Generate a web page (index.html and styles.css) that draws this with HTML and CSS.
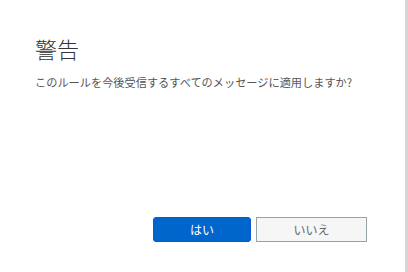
FILE: index.html
```html
<!DOCTYPE html>
<html lang="ja">
<head>
<meta charset="utf-8">
<link rel="stylesheet" href="styles.css">
</head>
<body>
<div class="dialog">
  <div class="content">
    <h1 class="title">警告</h1>
    <p class="message">このルールを今後受信するすべてのメッセージに適用しますか?</p>
  </div>
  <div class="actions">
    <button class="btn btn-primary">はい</button>
    <button class="btn btn-secondary">いいえ</button>
  </div>
</div>
</body>
</html>
```
FILE: styles.css
```css
html, body {
  margin: 0;
  padding: 0;
  background: #ffffff;
}
body {
  font-family: "Noto Sans CJK JP", "Noto Sans", sans-serif;
}
.dialog {
  box-sizing: border-box;
  width: 408px;
  height: 272px;
  border-right: 3px solid #d6d6d6;
  display: flex;
  flex-direction: column;
  padding: 33px 38px 0 35px;
}
.content {
  height: 184px;
}
.title {
  margin: 0;
  font-size: 22px;
  font-weight: 300;
  line-height: 30px;
  color: #333333;
}
.message {
  margin: 11px 0 0;
  font-size: 11.2px;
  line-height: 16px;
  color: #555555;
}
.actions {
  display: flex;
  justify-content: flex-end;
  gap: 5px;
}
.btn {
  box-sizing: border-box;
  height: 25px;
  font-family: "Noto Sans CJK JP", sans-serif;
  font-size: 12px;
  padding: 0;
  cursor: pointer;
}
.btn-primary {
  width: 98px;
  background: #0066cc;
  border: 1px solid #0a55d8;
  border-radius: 3px;
  color: #ffffff;
}
.btn-secondary {
  width: 111px;
  background: #f6f6f6;
  border: 1px solid #98a3a8;
  border-radius: 0;
  color: #666666;
}
```
